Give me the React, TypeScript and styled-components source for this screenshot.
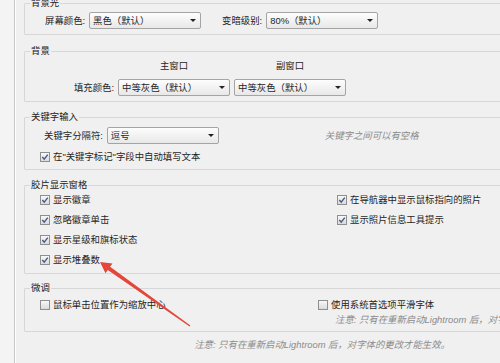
import React from "react";
import styled, { createGlobalStyle } from "styled-components";

const GlobalStyle = createGlobalStyle`
  html, body {
    margin: 0;
    padding: 0;
    background: #f0f0f0;
  }
  body {
    font-family: "Liberation Sans", "Noto Sans CJK SC", sans-serif;
    font-size: 9.4px;
    color: #1f1f1f;
  }
`;

const Page = styled.div`
  position: relative;
  display: flex;
  width: 500px;
  height: 363px;
  overflow: hidden;
  background: #f0f0f0;
`;

const SideStrip = styled.div`
  flex: 0 0 14px;
  background: #f4f4f4;
  border-right: 1px solid #c8c8c8;
  box-shadow: 1px 0 0 #fdfdfd;
`;

const Panel = styled.div`
  flex: 1;
  min-width: 0;
  padding-left: 9px;
  display: flex;
  flex-direction: column;
`;

const Group = styled.fieldset<{ $top: number }>`
  margin: ${(p) => p.$top}px -40px 0 0;
  padding: 0;
  min-width: 0;
  border: 1px solid #d7d7d7;
  border-radius: 1px;
`;

const Legend = styled.legend`
  margin-left: 5px;
  padding: 0 1px;
  line-height: 12px;
  color: #222;
`;

const Body = styled.div<{ $pt: number; $pb: number; $gap?: number }>`
  display: flex;
  flex-direction: column;
  gap: ${(p) => p.$gap ?? 6}px;
  padding: ${(p) => p.$pt}px 0 ${(p) => p.$pb}px 15px;
`;

const Row = styled.div`
  display: flex;
  align-items: center;
  gap: 4px;
  height: 17px;
`;

const FieldLabel = styled.span<{ $offset?: number }>`
  margin-left: ${(p) => p.$offset ?? 0}px;
  line-height: 12px;
  white-space: nowrap;
`;

const Select = styled.div`
  box-sizing: border-box;
  flex: 0 0 112px;
  width: 112px;
  height: 17px;
  display: flex;
  align-items: center;
  justify-content: space-between;
  padding: 0 4px 0 3px;
  border: 1px solid #a4a4a4;
  border-radius: 2px;
  background: linear-gradient(#fdfdfd, #e8e8e8);
  line-height: 12px;
  white-space: nowrap;
`;

const Caret = styled.span`
  width: 0;
  height: 0;
  border-left: 3px solid transparent;
  border-right: 3px solid transparent;
  border-top: 3px solid #222;
`;

const Hint = styled.span<{ $offset?: number }>`
  margin-left: ${(p) => p.$offset ?? 0}px;
  font-style: italic;
  color: #8a8a8a;
  line-height: 12px;
  white-space: nowrap;
`;

const DualGrid = styled.div`
  display: grid;
  grid-template-columns: 74px 112px 112px;
  grid-template-rows: 12px 17px;
  column-gap: 4px;
  row-gap: 7px;
  align-items: center;
`;

const ColHead = styled.span`
  text-align: center;
  line-height: 12px;
`;

const GridLabel = styled.span`
  justify-self: end;
  line-height: 12px;
  white-space: nowrap;
`;

const Columns = styled.div<{ $first: number }>`
  display: grid;
  grid-template-columns: ${(p) => p.$first}px auto;
  align-items: start;
`;

const Stack = styled.div<{ $gap?: number }>`
  display: flex;
  flex-direction: column;
  gap: ${(p) => p.$gap ?? 6}px;
`;

const CheckRow = styled.label`
  display: flex;
  align-items: center;
  gap: 3px;
  height: 14px;
  line-height: 12px;
  white-space: nowrap;
`;

const Box = styled.span`
  box-sizing: border-box;
  flex: 0 0 10px;
  width: 10px;
  height: 10px;
  display: flex;
  align-items: center;
  justify-content: center;
  border: 1px solid #8f8f8f;
  background: linear-gradient(#f8f8f8, #dadada);
`;

const Note = styled.span`
  padding-left: 17px;
  font-style: italic;
  color: #8a8a8a;
  line-height: 12px;
  white-space: nowrap;
`;

const Footer = styled.p`
  margin: 7px 0 0;
  padding-right: 50px;
  text-align: right;
  font-style: italic;
  color: #8c8c8c;
  line-height: 12px;
  white-space: nowrap;
`;

const Overlay = styled.svg`
  position: absolute;
  left: 0;
  top: 0;
  pointer-events: none;
`;

const Check = ({ checked, children }: { checked?: boolean; children: React.ReactNode }) => (
  <CheckRow>
    <Box>
      {checked && (
        <svg width="8" height="8" viewBox="0 0 8 8">
          <path d="M1.3 4.1 L3.2 6.1 L6.8 1.6" fill="none" stroke="#4a5a82" strokeWidth="1.4" />
        </svg>
      )}
    </Box>
    {children}
  </CheckRow>
);

const Dropdown = ({ value }: { value: string }) => (
  <Select>
    {value}
    <Caret />
  </Select>
);

const App = () => {
  return (
    <Page>
      <GlobalStyle />
      <SideStrip />
      <Panel>
        <Group $top={-3}>
          <Legend>背景光</Legend>
          <Body $pt={3} $pb={5}>
            <Row>
              <FieldLabel $offset={5}>屏幕颜色:</FieldLabel>
              <Dropdown value="黑色（默认）" />
              <FieldLabel $offset={17}>变暗级别:</FieldLabel>
              <Dropdown value="80%（默认）" />
            </Row>
          </Body>
        </Group>

        <Group $top={10}>
          <Legend>背景</Legend>
          <Body $pt={3} $pb={5}>
            <DualGrid>
              <span />
              <ColHead>主窗口</ColHead>
              <ColHead>副窗口</ColHead>
              <GridLabel>填充颜色:</GridLabel>
              <Dropdown value="中等灰色（默认）" />
              <Dropdown value="中等灰色（默认）" />
            </DualGrid>
          </Body>
        </Group>

        <Group $top={9}>
          <Legend>关键字输入</Legend>
          <Body $pt={4} $pb={5}>
            <Row>
              <FieldLabel $offset={4}>关键字分隔符:</FieldLabel>
              <Dropdown value="逗号" />
              <Hint $offset={102}>关键字之间可以有空格</Hint>
            </Row>
            <Check checked>在"关键字标记"字段中自动填写文本</Check>
          </Body>
        </Group>

        <Group $top={9}>
          <Legend>胶片显示窗格</Legend>
          <Body $pt={2} $pb={6}>
            <Columns $first={297}>
              <Stack>
                <Check checked>显示徽章</Check>
                <Check checked>忽略徽章单击</Check>
                <Check checked>显示星级和旗标状态</Check>
                <Check checked>显示堆叠数</Check>
              </Stack>
              <Stack>
                <Check checked>在导航器中显示鼠标指向的照片</Check>
                <Check checked>显示照片信息工具提示</Check>
              </Stack>
            </Columns>
          </Body>
        </Group>

        <Group $top={8}>
          <Legend>微调</Legend>
          <Body $pt={4} $pb={5}>
            <Columns $first={278}>
              <Stack>
                <Check>鼠标单击位置作为缩放中心</Check>
              </Stack>
              <Stack $gap={2}>
                <Check>使用系统首选项平滑字体</Check>
                <Note>注意: 只有在重新启动Lightroom 后，对字体的更改才能生效。</Note>
              </Stack>
            </Columns>
          </Body>
        </Group>

        <Footer>注意: 只有在重新启动Lightroom 后，对字体的更改才能生效。</Footer>
      </Panel>

      <Overlay width="500" height="363" viewBox="0 0 500 363">
        <polygon
          points="100,262 112.5,263.5 110.1,266.8 190.4,325.4 189.6,326.6 107.8,270 105.5,273.3"
          fill="#e5463a"
        />
      </Overlay>
    </Page>
  );
};

export default App;
